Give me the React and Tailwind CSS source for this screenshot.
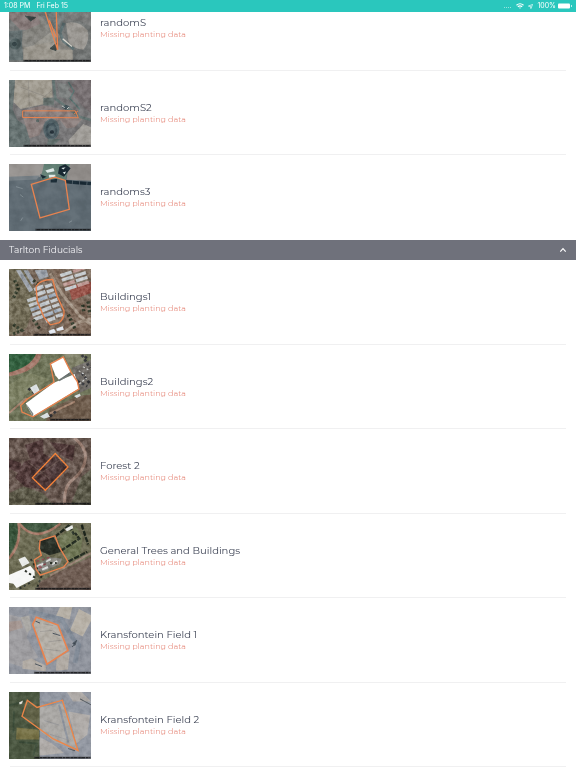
import React from "react";

const ORANGE = "#e8834f";

function Attribution({ x, y, w }) {
  return (
    <>
      <rect x={x} y={y} width={w} height="6" fill="#17181a" opacity="0.55" />
      <path d={`M${x + 4} ${y + 3}h${w - 8}`} stroke="#111214" strokeWidth="4" strokeDasharray="11 3 7 2" opacity="0.7" />
    </>
  );
}

function Grain({ id, seed, x, y, strength = 0.25, scale = 0.06 }) {
  return (
    <>
      <filter id={id} x="0" y="0" width="100%" height="100%" colorInterpolationFilters="sRGB">
        <feTurbulence type="fractalNoise" baseFrequency={scale} numOctaves="4" seed={seed} />
        <feColorMatrix values="2 0 0 0 -0.5  2 0 0 0 -0.5  2 0 0 0 -0.5  0 0 0 0 1" />
      </filter>
      <rect x={x} y={y} width="246" height="204" filter={`url(#${id})`} opacity={strength} style={{ mixBlendMode: "soft-light" }} />
    </>
  );
}

function RandomSMap() {
  return (
    <svg viewBox="27 -15 246 204" preserveAspectRatio="none" className="h-full w-full" aria-hidden="true">
      <rect x="27" y="-15" width="246" height="204" fill="#747776" />
      <path d="M27 -15H110L122 70L105 95L60 90L27 55Z" fill="#857978" />
      <path d="M27 95L66 92L70 184H27Z" fill="#667172" />
      <path d="M70 95L122 72L110 40L165 90L215 150L218 181H70L66 130Z" fill="#85847f" />
      <path d="M100 138L165 88L168 128L150 152Z" fill="#96948d" />
      <path d="M198 70Q235 60 262 92Q272 120 250 152Q215 148 205 125Z" fill="#9b9893" />
      <path d="M72 145L150 128L165 150L218 152V184H70Z" fill="#9b978e" />
      <path d="M120 -15H200L190 60L175 92L140 72Z" fill="#737b7b" />
      <path d="M205 -15H273V80L238 62L200 68Z" fill="#7b7c7b" />
      <circle cx="46" cy="134" r="17" fill="#4d5c5d" />
      <circle cx="43" cy="134" r="7" fill="#2b393c" />
      <path d="M192 70L180 100L190 125L222 150" fill="none" stroke="#5d6e70" strokeWidth="9" />
      <path d="M188 118L216 142" stroke="#d6d3ca" strokeWidth="4" />
      <path d="M75 48L92 64L108 52M150 148L170 132L168 154Z" fill="#3c4746" stroke="#3c4746" strokeWidth="3" />
      <Grain id="g1" seed={4} x={27} y={-15} />
      <path d="M122 -10L140 50L173 152L167 -10M148 62L168 112" fill="none" stroke={ORANGE} strokeWidth="4" />
      <Attribution x={70} y={182} w={203} />
    </svg>
  );
}

function RandomS2Map() {
  return (
    <svg viewBox="27 28 246 204" preserveAspectRatio="none" className="h-full w-full" aria-hidden="true">
      <rect x="27" y="28" width="246" height="204" fill="#797879" />
      <path d="M45 28H155L158 80L130 102L62 116L40 95Z" fill="#a19c91" />
      <path d="M62 50L150 84M85 30L88 112M120 90L155 60" stroke="#908c84" strokeWidth="3" fill="none" />
      <path d="M27 28H45L38 118L52 150L88 175L90 232H27Z" fill="#667271" />
      <path d="M75 118L130 106L210 122L248 145L225 172L200 176L180 150L135 152L118 196L88 205L70 145Z" fill="#8b7f7d" />
      <path d="M130 82H162V105H130Z" fill="#67716e" />
      <path d="M160 28L166 85L215 122L238 140L273 150" fill="none" stroke="#657573" strokeWidth="8" />
      <path d="M172 36L230 45L205 82L222 95L178 78Z" fill="#7e8281" />
      <path d="M225 28H273V130L245 105L205 58Z" fill="#777072" />
      <path d="M205 34L222 62L210 84L240 118" fill="none" stroke="#5b7472" strokeWidth="4" />
      <path d="M205 212L250 162L273 172V228H210Z" fill="#a09d98" />
      <ellipse cx="154" cy="178" rx="24" ry="32" fill="#56666b" />
      <ellipse cx="154" cy="182" rx="14" ry="20" fill="none" stroke="#43535a" strokeWidth="7" />
      <circle cx="156" cy="186" r="6" fill="#232f37" />
      <path d="M145 208L182 208L160 228H140Z" fill="#667371" />
      <path d="M184 110L198 104L211 108L200 120Z" fill="#3a4a50" />
      <path d="M186 107L194 112M200 117L208 110" stroke="#c6c8c4" strokeWidth="3" />
      <circle cx="113" cy="152" r="5" fill="#556260" />
      <Grain id="g2" seed={9} x={27} y={28} />
      <path d="M68 122H226L235 143L68 142ZM222 132L234 122" fill="none" stroke={ORANGE} strokeWidth="3" />
      <Attribution x={70} y={225} w={203} />
    </svg>
  );
}

function RandomS3Map() {
  return (
    <svg viewBox="27 27 246 204" preserveAspectRatio="none" className="h-full w-full" aria-hidden="true">
      <rect x="27" y="27" width="246" height="204" fill="#5f6b73" />
      <path d="M27 27H140L120 66L27 68Z" fill="#989491" />
      <path d="M205 27H273V78L200 75Z" fill="#908c89" />
      <path d="M132 27H210L196 74H122Z" fill="#638075" />
      <path d="M27 66L120 62L110 74L27 78Z" fill="#778086" />
      <path d="M178 35L196 28L212 40L192 66L174 56ZM120 58L140 66L128 72ZM152 75L172 72L170 83H152Z" fill="#1a2a34" />
      <path d="M136 47L160 39L164 49L142 54ZM146 60L166 60V66L148 69ZM184 39L197 37L190 44ZM188 53L198 50L194 58Z" fill="#dee9e7" />
      <path d="M196 81L273 87" stroke="#182833" strokeWidth="10" strokeDasharray="20 2" />
      <path d="M48 96L68 102M60 120L70 128M62 200L68 190M207 205L216 200" stroke="#7f8b91" strokeWidth="3" />
      <Grain id="g3" seed={3} x={27} y={27} strength={0.12} scale={0.03} />
      <path d="M94 89L165 67L196 77L208 165L120 191Z" fill="none" stroke={ORANGE} strokeWidth="4" />
      <Attribution x={106} y={224} w={167} />
    </svg>
  );
}

function Buildings1Map() {
  const roofs = Array.from({ length: 8 }, (_, i) => i);
  return (
    <svg viewBox="27 21 246 204" preserveAspectRatio="none" className="h-full w-full" aria-hidden="true">
      <rect x="27" y="21" width="246" height="204" fill="#7c6c5e" />
      <path d="M27 21H80L110 110L80 200L27 225Z" fill="#736d58" />
      <path d="M155 21H180L273 150V225H180L205 150Z" fill="#7f6b5c" />
      <path d="M205 72L273 60V94L216 116Z" fill="#99554b" />
      <g transform="rotate(-18 228 50)">
        {roofs.map((i) => (
          <rect key={i} x={186 + (i % 2) * 40} y={22 + Math.floor(i / 2) * 15} width="36" height="10" fill={i % 3 === 1 ? "#be9a95" : "#c8cdd0"} />
        ))}
      </g>
      <path d="M48 25L62 24L100 86L88 92ZM70 25H84L106 62L96 68ZM104 25L140 23L146 44L118 54Z" fill="#9aa0a8" />
      <g transform="rotate(-20 145 120)">
        {roofs.map((i) => (
          <g key={i} fill={i % 3 === 2 ? "#a4b0be" : "#c4c9cd"}>
            {i < 7 && <rect x="117" y={66 + i * 17} width="30" height="11" />}
            {i < 7 && <rect x="151" y={70 + i * 16} width="22" height="10" />}
            {i < 5 && <rect x="86" y={92 + i * 15} width="28" height="10" />}
          </g>
        ))}
      </g>
      <path d="M150 35L185 95L240 165L273 190M178 225L232 185L273 172" fill="none" stroke="#a39485" strokeWidth="9" />
      <path d="M44 55L55 80L40 110M40 190L65 208L38 220M100 55L118 70M264 120L270 160M248 130L252 155M100 175L122 207M205 160L226 205" fill="none" stroke="#303829" strokeWidth="10" strokeDasharray="7 6" />
      <path d="M145 210L162 203L168 214L150 220ZM168 203L188 195L192 206L172 210Z" fill="#e0e6ef" />
      <Grain id="g4" seed={12} x={27} y={21} strength={0.4} scale={0.08} />
      <path d="M108 75Q120 52 158 53L170 100L192 148Q194 170 178 184L151 191L132 168L112 120Z" fill="none" stroke={ORANGE} strokeWidth="4" />
      <Attribution x={100} y={218} w={173} />
    </svg>
  );
}

function Buildings2Map() {
  return (
    <svg viewBox="27 17 246 204" preserveAspectRatio="none" className="h-full w-full" aria-hidden="true">
      <rect x="27" y="17" width="246" height="204" fill="#6f7459" />
      <path d="M27 17H125Q115 70 27 85Z" fill="#a3786a" />
      <path d="M27 17H108Q92 57 27 73Z" fill="#33603f" />
      <path d="M27 110L90 75L150 95L90 130L27 190Z" fill="#7e8265" />
      <path d="M190 17H255L237 70L210 60Z" fill="#83846c" />
      <path d="M215 60L273 35V120L240 135Z" fill="#716d68" />
      <path d="M150 184L235 145L273 140V221H138Z" fill="#6e5c4c" />
      <path d="M27 197L80 151M150 198L225 162" stroke="#a58672" strokeWidth="6" />
      <path d="M246 20L270 60M245 75L268 105M232 100L262 115M150 207L170 190M85 122L105 137M255 30L262 22" stroke="#35363a" strokeWidth="8" strokeDasharray="8 7" />
      <path d="M236 68L258 82M228 115L260 91M265 65L248 55" stroke="#cfd0ce" strokeWidth="4" strokeDasharray="6 6" />
      <path d="M152 45L190 26L212 72L178 97L166 82Z" fill="#fff" />
      <path d="M77 168L160 105L224 78L237 122L99 207Z" fill="#fff" />
      <path d="M86 178L100 198L99 207L77 168ZM175 96L211 72L213 80L178 100Z" fill="#737b7a" />
      <path d="M90 120L109 108L119 128L104 141ZM120 207L142 195L150 208L132 214ZM222 145L240 137L242 145L230 151Z" fill="#dde2e4" />
      <Grain id="g5" seed={19} x={27} y={17} strength={0.3} scale={0.07} />
      <path d="M151 47L190 26L213 72L232 101L237 124L99 208L66 194L62 174L82 154L162 103Z" fill="none" stroke={ORANGE} strokeWidth="4" />
      <Attribution x={150} y={214} w={123} />
    </svg>
  );
}

function Forest2Map() {
  return (
    <svg viewBox="27 17 246 204" preserveAspectRatio="none" className="h-full w-full" aria-hidden="true">
      <rect x="27" y="17" width="246" height="204" fill="#67574f" />
      <path d="M75 38L130 20L130 72L90 80ZM72 90L132 66L205 105L137 176L75 165L45 138ZM150 30L225 40L218 88L180 68ZM27 80L62 92L70 130L27 110Z" fill="#503a39" />
      <path d="M145 105L165 70L200 105L160 140Z" fill="#503d3d" />
      <path d="M27 185L70 165L130 185L160 221H27Z" fill="#5e5b4a" />
      <path d="M85 90L148 140M178 85L98 142M205 40L175 62" stroke="#67534f" strokeWidth="4" />
      <path d="M222 17Q255 40 257 75Q253 120 212 149Q191 170 194 218" fill="none" stroke="#967c70" strokeWidth="9" />
      <path d="M245 135L273 112V221H212Z" fill="#5c5a4a" />
      <Grain id="g6" seed={22} x={27} y={17} strength={0.45} scale={0.065} />
      <path d="M166 64L204 105L136 176L97 138Z" fill="none" stroke="#ec7638" strokeWidth="4" />
      <path d="M166 64L204 105L136 176L97 138Z" fill="none" stroke="#f1a33e" strokeWidth="2" strokeDasharray="5 4" />
      <Attribution x={105} y={214} w={168} />
    </svg>
  );
}

function TreesMap() {
  return (
    <svg viewBox="27 20 246 204" preserveAspectRatio="none" className="h-full w-full" aria-hidden="true">
      <rect x="27" y="20" width="246" height="204" fill="#6f6e56" />
      <path d="M27 20H54Q58 75 27 120Z" fill="#375239" />
      <path d="M62 20H178Q125 62 82 40Z" fill="#405740" />
      <path d="M55 20Q66 85 27 128M58 22Q105 85 181 22" fill="none" stroke="#ab7f6e" strokeWidth="7" />
      <path d="M170 65L228 30L248 65L240 120L205 135Z" fill="#707756" />
      <path d="M115 75L158 60L174 85L182 108L148 118L122 105Z" fill="#282e26" />
      <path d="M145 185L273 122V224H110L120 198Z" fill="#705e54" />
      <path d="M150 180L273 112" stroke="#998476" strokeWidth="6" />
      <path d="M165 62L212 23M182 105L238 68L225 50M205 137L262 108M245 25L264 85M207 28L222 55" stroke="#222a20" strokeWidth="7" strokeDasharray="16 4" fill="none" />
      <path d="M27 178L91 150L104 166L104 190L50 218L40 205L27 203Z" fill="#f6f7f6" />
      <path d="M55 130L75 122L89 142L67 153ZM195 38L217 26L220 36L201 45Z" fill="#e8eae8" />
      <path d="M106 150L150 124L186 128L180 145L130 168L108 166Z" fill="#85847e" />
      <path d="M112 152L130 144M138 138L152 130M126 162L144 154M156 146L172 136" stroke="#d8dad8" strokeWidth="6" />
      <path d="M110 137L154 123M115 153L145 142M102 160L128 154" stroke="#8f4851" strokeWidth="4" strokeDasharray="8 8" />
      <path d="M92 130L125 180L112 215M58 220L90 202M75 165L110 190M150 142L170 142M130 90L162 70" stroke="#2c3129" strokeWidth="6" strokeDasharray="7 8" fill="none" />
      <Grain id="g7" seed={31} x={27} y={20} strength={0.3} scale={0.07} />
      <path d="M120 74L165 59L177 92L204 138L191 154L121 179L109 162L103 132L124 118L118 98Z" fill="none" stroke={ORANGE} strokeWidth="4" />
      <Attribution x={105} y={217} w={168} />
    </svg>
  );
}

function Field1Map() {
  return (
    <svg viewBox="27 17 246 204" preserveAspectRatio="none" className="h-full w-full" aria-hidden="true">
      <rect x="27" y="17" width="246" height="204" fill="#91959e" />
      <path d="M27 40L62 48L94 75L80 110L115 170L66 200L27 187Z" fill="#9f9ea1" />
      <path d="M27 62L62 58L69 80L27 92Z" fill="#a59792" />
      <path d="M62 48L88 43L94 84L80 95Z" fill="#aba9a5" />
      <path d="M180 17H217L209 55L168 44ZM237 23L273 42V60L248 107L210 88Z" fill="#b7b1a7" />
      <path d="M68 182L94 174L138 196L137 213L67 205ZM170 171L209 153L204 207L168 211Z" fill="#b2aca5" />
      <path d="M109 49L174 72L204 148L141 191L99 71Z" fill="#b4afa7" />
      <path d="M87 30L184 54L218 112L236 132L225 187" fill="none" stroke="#838c98" strokeWidth="14" />
      <path d="M130 68L160 74M120 92L158 88L176 103M145 123L185 118M132 145L182 151" stroke="#918e8c" strokeWidth="2" fill="none" />
      <path d="M218 128L226 122L230 118L225 134ZM216 138L224 132M106 60L120 66M158 97L181 104M105 190L126 198" stroke="#4a535c" strokeWidth="3" fill="#333e48" />
      <Grain id="g8" seed={43} x={27} y={17} strength={0.2} />
      <path d="M109 48L174 72L204 149L141 191L98 70Z" fill="none" stroke={ORANGE} strokeWidth="5" />
      <Attribution x={102} y={214} w={171} />
    </svg>
  );
}

function Field2Map() {
  return (
    <svg viewBox="27 21 246 204" preserveAspectRatio="none" className="h-full w-full" aria-hidden="true">
      <rect x="27" y="21" width="246" height="204" fill="#9398a2" />
      <path d="M27 21H119V225H27Z" fill="#4b5741" />
      <path d="M77 45L119 67V131L65 95Z" fill="#636449" />
      <path d="M50 129L117 136V166H48Z" fill="#777247" />
      <path d="M27 62L77 48M42 80L40 145M57 173L110 178L100 215" stroke="#3d4d3a" strokeWidth="5" fill="none" />
      <path d="M119 68L184 55L204 90L231 193L166 175L119 139Z" fill="#aaa8a5" />
      <path d="M205 80L270 92L262 151L229 178ZM119 158L156 178L192 207L119 214ZM200 20H244L273 50H219Z" fill="#b0aca9" />
      <path d="M119 43L180 36L213 70L273 82M177 60L205 175" stroke="#8e949e" strokeWidth="6" fill="none" />
      <path d="M133 108L178 122M150 150L208 168" stroke="#979799" strokeWidth="3" fill="none" />
      <path d="M204 193L225 200M240 42L273 60" stroke="#565d63" strokeWidth="3" />
      <path d="M57 53L69 47L66 56L59 59Z" fill="#e2e1da" />
      <Grain id="g9" seed={51} x={27} y={21} strength={0.2} />
      <path d="M82 46L111 68L187 46L234 199L160 164L66 95Z" fill="none" stroke="#ed8648" strokeWidth="4" />
      <Attribution x={102} y={218} w={171} />
    </svg>
  );
}

const firstFields = [
  { name: "randomS", Map: RandomSMap },
  { name: "randomS2", Map: RandomS2Map },
  { name: "randoms3", Map: RandomS3Map },
];

const fiducials = [
  { name: "Buildings1", Map: Buildings1Map },
  { name: "Buildings2", Map: Buildings2Map },
  { name: "Forest 2", Map: Forest2Map },
  { name: "General Trees and Buildings", Map: TreesMap },
  { name: "Kransfontein Field 1", Map: Field1Map },
  { name: "Kransfontein Field 2", Map: Field2Map },
];

function FieldList({ fields, divideLast }) {
  return (
    <ul>
      {fields.map(({ name, Map }, i) => (
        <li key={name} className="relative flex gap-[9px] pt-[9px] pl-[9px] odd:h-[85px] even:h-[84px]">
          <div className="h-[67px] w-[82px] shrink-0 overflow-hidden">
            <Map />
          </div>
          <div className="min-w-0 pt-5">
            <h3 className="text-[10px] leading-4 text-[#3f4556]">{name}</h3>
            <p className="text-[8px] leading-[6px] font-light text-[#e0705f]">Missing planting data</p>
          </div>
          {(divideLast || i < fields.length - 1) && (
            <div className="absolute right-[10px] bottom-0 left-[10px] h-px bg-[#f0f0f1]" />
          )}
        </li>
      ))}
    </ul>
  );
}

export default function App() {
  return (
    <div className="flex h-screen flex-col overflow-hidden bg-white font-[Montserrat,Inter,sans-serif]">
      <header className="flex h-3 shrink-0 items-center justify-between bg-[#2ac7bd] pr-1 pl-1 font-[Inter,sans-serif] text-[7px] leading-3 text-white">
        <div className="flex gap-[6px]">
          <span>1:08 PM</span>
          <span>Fri Feb 15</span>
        </div>
        <div className="flex items-center gap-1">
          <svg viewBox="0 0 8 6" className="h-[6px] w-2" aria-hidden="true">
            <path d="M0 4.500H8" stroke="#fff" strokeWidth="1" strokeDasharray="1 1" opacity="0.5" />
          </svg>
          <svg viewBox="0 0 16 12" className="h-[6px] w-2" fill="none" stroke="#fff" strokeWidth="2.400" aria-hidden="true">
            <path d="M1 4.500Q8 -1.500 15 4.500M3.700 7.500Q8 3.700 12.300 7.500" />
            <path d="M6 9.500Q8 8 10 9.500L8 11.500Z" fill="#fff" stroke="none" />
          </svg>
          <svg viewBox="0 0 12 12" className="h-[5px] w-[5px]" fill="none" stroke="#fff" strokeWidth="1.600" aria-hidden="true">
            <path d="M11 1L7 11L6 6L1 5Z" />
          </svg>
          <div className="flex items-center gap-[2px]">
            <span>100%</span>
            <svg viewBox="0 0 14 6" className="h-[6px] w-[14px]" aria-hidden="true">
              <rect x="0" y="0.500" width="12" height="5" rx="1" fill="#fff" />
              <rect x="13" y="2" width="1" height="2" fill="#fff" opacity="0.7" />
            </svg>
          </div>
        </div>
      </header>
      <main className="min-h-0 flex-1 overflow-hidden">
        <section className="-mt-[26px]">
          <FieldList fields={firstFields} />
        </section>
        <section>
          <h2>
            <button
              type="button"
              aria-expanded="true"
              className="flex h-5 w-full items-center justify-between bg-[#6f717b] pr-[9px] pl-[9px] text-[9px] leading-5 text-[#f1f1f4]"
            >
              <span>Tarlton Fiducials</span>
              <svg viewBox="0 0 8 6" className="h-[6px] w-2" fill="none" stroke="#fff" strokeWidth="1.200" aria-hidden="true">
                <path d="M1.300 4.600L4 1.700L6.700 4.600" />
              </svg>
            </button>
          </h2>
          <FieldList fields={fiducials} divideLast />
        </section>
      </main>
    </div>
  );
}
